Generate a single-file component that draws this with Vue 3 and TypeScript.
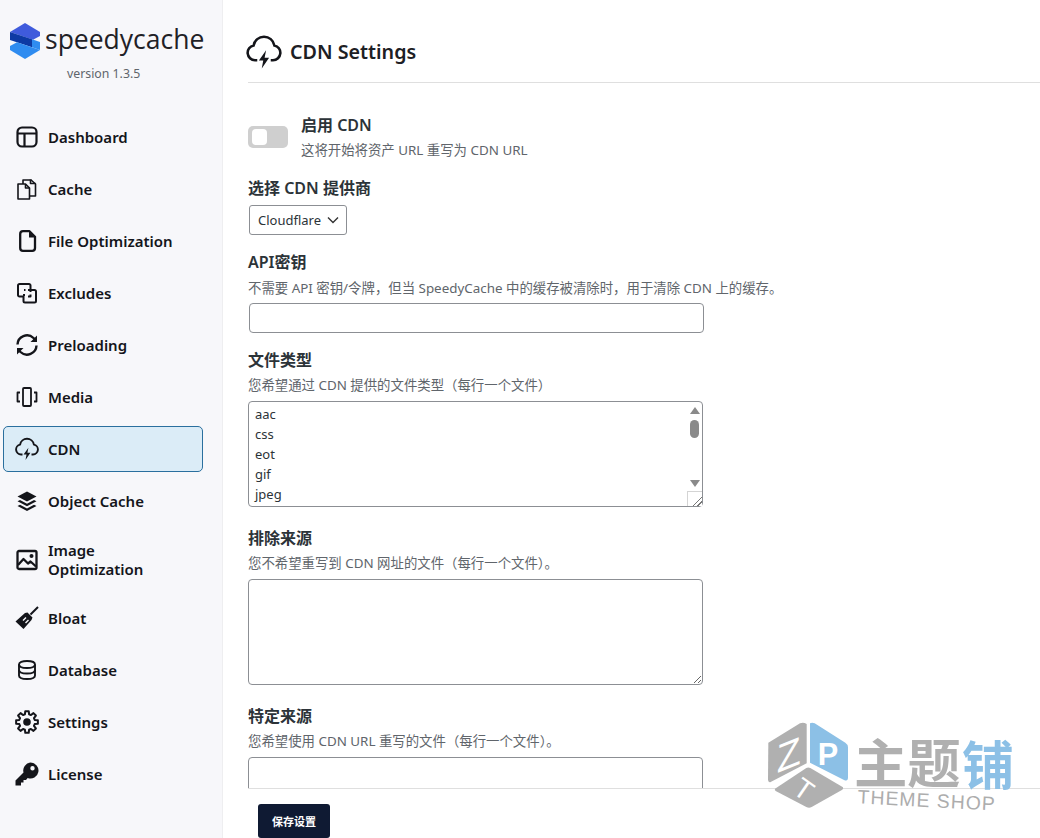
<script setup lang="ts">
interface NavItem {
  label: string
  icon: string
  active?: boolean
}

interface IconDef {
  stroke?: string[]
  fill?: string[]
  sw?: number
}

// Gear outline, generated so the teeth stay even
function gearPath(cx: number, cy: number, outer: number, inner: number, teeth: number): string {
  const pts: string[] = []
  const step = (Math.PI * 2) / teeth
  for (let i = 0; i < teeth; i++) {
    const a = i * step
    const offsets: [number, number][] = [
      [-0.2, outer],
      [0.2, outer],
      [0.34, inner],
      [0.66, inner],
    ]
    for (const [o, r] of offsets) {
      const t = a + o * step - Math.PI / 2
      pts.push(`${(cx + r * Math.cos(t)).toFixed(2)} ${(cy + r * Math.sin(t)).toFixed(2)}`)
    }
  }
  return `M${pts.join('L')}Z`
}

const icons: Record<string, IconDef> = {
  dashboard: {
    sw: 2.2,
    stroke: ['M7 2.500h10a4.500 4.500 0 0 1 4.500 4.500v10a4.500 4.500 0 0 1-4.500 4.500H7A4.500 4.500 0 0 1 2.500 17V7A4.500 4.500 0 0 1 7 2.500z', 'M2.500 8.500h19M9.500 8.500v13'],
  },
  cache: {
    sw: 1.6,
    stroke: ['M3 7h7.500l4 4v11H3z', 'M10.500 7v4h4', 'M8 7V3h7.500', 'M15.500 2.500v4h5', 'M15.500 2.500l5 4.500v12H14.500'],
  },
  file: {
    sw: 2.3,
    stroke: ['M8 2.200h6.500l5.500 5.500V19a2.800 2.800 0 0 1-2.800 2.800H8A2.800 2.800 0 0 1 5.200 19V5A2.800 2.800 0 0 1 8 2.200z'],
    fill: ['M14 2.500l6 6h-6z'],
  },
  excludes: {
    sw: 2,
    stroke: [
      'M9 15.500H4.500a1.500 1.500 0 0 1-1.500-1.500V4.500A1.500 1.500 0 0 1 4.500 3h9.500A1.500 1.500 0 0 1 15.500 4.500V9',
      'M15.500 9h4a1.500 1.500 0 0 1 1.500 1.500V20a1.500 1.500 0 0 1-1.500 1.500H10A1.500 1.500 0 0 1 8.500 20v-4',
      'M9 9h1.500M13 9h2.500v2M15.500 13.500v2H13M9 15.500V13',
    ],
  },
  preload: {
    sw: 2.4,
    stroke: ['M2.500 11.500a9.500 9.500 0 0 1 16-6.500L20 6.500', 'M21.500 12.500a9.500 9.500 0 0 1-16 6.500L4 17.500'],
    fill: ['M22 2.500v6.500h-6.500z', 'M2 21.500V15h6.500z'],
  },
  media: {
    sw: 1.8,
    stroke: ['M9 3h6a1 1 0 0 1 1 1v16a1 1 0 0 1-1 1H9a1 1 0 0 1-1-1V4a1 1 0 0 1 1-1z', 'M5 7.500H2.500v9H5M19 7.500h2.500v9H19'],
  },
  cdn: {
    sw: 1.9,
    stroke: ['M7.500 17.500H6a5 5 0 0 1-.9-9.900 7 7 0 0 1 13.800 0 5 5 0 0 1-.9 9.900H16.500'],
    fill: ['M13.400 10.800L8.600 17.600h2.900l-1 5.400 4.900-7.200h-3z'],
  },
  layers: {
    fill: [
      'M12 2.500l9.500 5L12 12.500 2.500 7.500z',
      'M5 11l7 3.700 7-3.700 2.500 1.300L12 17.300 2.500 12.300z',
      'M5 15.700l7 3.700 7-3.700 2.500 1.300L12 22 2.500 17z',
    ],
  },
  image: {
    sw: 2.3,
    stroke: ['M4 3h16a1.500 1.500 0 0 1 1.500 1.500v15A1.500 1.500 0 0 1 20 21H4A1.500 1.500 0 0 1 2.500 19.500v-15A1.500 1.500 0 0 1 4 3z', 'M3 17l5.500-6 4.500 4.500 2.500-2 5.500 5'],
    fill: ['M16.500 6a2 2 0 1 1 0 4 2 2 0 0 1 0-4z'],
  },
  brush: {
    sw: 2,
    stroke: ['M15.500 8.500L23 1'],
    fill: ['M12.500 6.500l5 5-1 2.500L8.500 23 .5 15.500l9.500-8.500zM10.500 11l-3 3 1 1 3-3zM13 13.500l-3 3 1 1 3-3z'],
  },
  database: {
    sw: 1.9,
    stroke: [
      'M12 3c4.700 0 8 1.400 8 3.500S16.700 10 12 10 4 8.600 4 6.500 7.300 3 12 3z',
      'M4 6.500v11C4 19.600 7.300 21 12 21s8-1.400 8-3.500v-11',
      'M4 12c0 2.100 3.300 3.500 8 3.500s8-1.400 8-3.500',
    ],
  },
  settings: {
    sw: 2,
    stroke: [gearPath(12, 12, 11, 8, 8)],
    fill: ['M12 8.200a3.800 3.800 0 1 1 0 7.600 3.800 3.800 0 0 1 0-7.600z'],
  },
  key: {
    fill: [
      'M15.500.5a8 8 0 1 1-2.800 15.500L11 18H8.500v2.500H6v3H.5V18.500l8-8A8 8 0 0 1 15.500.5zM17.500 4a2.200 2.200 0 1 0 0 4.400 2.200 2.200 0 0 0 0-4.400z',
    ],
  },
}

const navItems: NavItem[] = [
  { label: 'Dashboard', icon: 'dashboard' },
  { label: 'Cache', icon: 'cache' },
  { label: 'File Optimization', icon: 'file' },
  { label: 'Excludes', icon: 'excludes' },
  { label: 'Preloading', icon: 'preload' },
  { label: 'Media', icon: 'media' },
  { label: 'CDN', icon: 'cdn', active: true },
  { label: 'Object Cache', icon: 'layers' },
  { label: 'Image Optimization', icon: 'image' },
  { label: 'Bloat', icon: 'brush' },
  { label: 'Database', icon: 'database' },
  { label: 'Settings', icon: 'settings' },
  { label: 'License', icon: 'key' },
]

const fileTypes = 'aac\ncss\neot\ngif\njpeg\njs\njpg\nless\nmp3\nmp4'
</script>

<template>
  <div class="page">
    <aside class="sidebar">
      <div class="brand">
        <div class="brand__row">
          <svg class="brand__logo" viewBox="0 0 30 36" aria-hidden="true">
            <path d="M0 9L15 0l15 9v4l-7 3.700z" fill="#3f5bdc" />
            <path d="M0 9l22 7.300v8L0 17z" fill="#0d3aa4" />
            <path d="M22 16.300L30 19v8l-8-2.700z" fill="#2f8cf0" />
            <path d="M30 27L15 36 0 27v-4l7-3.700z" fill="#2f8cf0" />
          </svg>
          <span class="brand__name">speedycache</span>
        </div>
        <div class="brand__version">version 1.3.5</div>
      </div>
      <nav class="nav">
        <a v-for="item in navItems" :key="item.label" class="nav__item" :class="{ 'nav__item--active': item.active }">
          <svg class="nav__icon" viewBox="0 0 24 24" aria-hidden="true">
            <path v-for="d in icons[item.icon].stroke" :key="d" :d="d" fill="none" stroke="#14151a" :stroke-width="icons[item.icon].sw" stroke-linejoin="round" />
            <path v-for="d in icons[item.icon].fill" :key="d" :d="d" fill="#14151a" fill-rule="evenodd" />
          </svg>
          <span>{{ item.label }}</span>
        </a>
      </nav>
    </aside>

    <main class="main">
      <div class="scroll">
        <header class="head">
          <svg class="head__icon" viewBox="0 0 24 24" aria-hidden="true">
            <path v-for="d in icons.cdn.stroke" :key="d" :d="d" fill="none" stroke="#14151a" stroke-width="1.700" />
            <path v-for="d in icons.cdn.fill" :key="d" :d="d" fill="#14151a" />
          </svg>
          <h1>CDN Settings</h1>
        </header>

        <div class="switch-row">
          <span class="switch"><span class="switch__knob"></span></span>
          <div>
            <div class="label label--switch">启用 CDN</div>
            <div class="hint">这将开始将资产 URL 重写为 CDN URL</div>
          </div>
        </div>

        <section class="field field--provider">
          <div class="label">选择 CDN 提供商</div>
          <div class="select">
            Cloudflare
            <svg viewBox="0 0 12 8" aria-hidden="true"><path d="M1 1.500l5 5 5-5" fill="none" stroke="#333" stroke-width="1.400" /></svg>
          </div>
        </section>

        <section class="field field--api">
          <div class="label">API密钥</div>
          <div class="hint">不需要 API 密钥/令牌，但当 SpeedyCache 中的缓存被清除时，用于清除 CDN 上的缓存。</div>
          <input class="input" type="text" />
        </section>

        <section class="field field--types">
          <div class="label">文件类型</div>
          <div class="hint">您希望通过 CDN 提供的文件类型（每行一个文件）</div>
          <div class="area-wrap">
            <textarea class="area area--scroll" :value="fileTypes" readonly></textarea>
            <!-- drawn scrollbar, the headless browser has only overlay ones -->
            <div class="fake-bar">
              <span class="fake-bar__up"></span>
              <span class="fake-bar__thumb"></span>
              <span class="fake-bar__down"></span>
              <span class="fake-bar__corner"></span>
            </div>
          </div>
        </section>

        <section class="field field--exclude">
          <div class="label">排除来源</div>
          <div class="hint">您不希望重写到 CDN 网址的文件（每行一个文件）。</div>
          <textarea class="area"></textarea>
        </section>

        <section class="field field--specific">
          <div class="label">特定来源</div>
          <div class="hint">您希望使用 CDN URL 重写的文件（每行一个文件）。</div>
          <textarea class="area"></textarea>
        </section>
      </div>

      <footer class="foot">
        <button class="save" type="button">保存设置</button>
      </footer>
    </main>

    <!-- watermark stamped over the screenshot -->
    <svg class="stamp" viewBox="0 0 870 384" aria-hidden="true">
      <path d="M55 98L150 40q10-5 20 2V160L62 216q-6 3-8-6z" fill="#b0b0b0" />
      <path d="M180 40q6-4 14 0l92 58q8 5 8 14v90q0 14-12 8l-102-52z" fill="#8cc0e6" />
      <path d="M75 236l94-62q6-3 12 0l98 58q2 4-2 7l-92 52q-8 4-16 0l-92-48q-4-3-2-7z" fill="#b0b0b0" />
      <text class="stamp__cube stamp__cube--z" transform="translate(80 190) skewY(-22)">Z</text>
      <text x="203" y="164" class="stamp__cube">P</text>
      <text x="136" y="272" class="stamp__cube stamp__cube--t" transform="rotate(35 170 240)">T</text>
      <text x="312" y="218" class="stamp__cn" textLength="320" lengthAdjust="spacingAndGlyphs" fill="#b0b0b0">主题</text>
      <text x="636" y="226" class="stamp__cn" textLength="156" lengthAdjust="spacingAndGlyphs" fill="#8cc0e6">铺</text>
      <text x="322" y="280" class="stamp__en" textLength="412" transform="rotate(3 322 280)">THEME SHOP</text>
    </svg>
  </div>
</template>

<style>
html,
body {
  margin: 0;
  background: #fff;
}
</style>

<style scoped>
.page {
  position: relative;
  display: flex;
  height: 100vh;
  overflow: hidden;
  font-family: 'Noto Sans', 'Noto Sans CJK SC', sans-serif;
  color: #2c3338;
}

.sidebar {
  flex: 0 0 223px;
  box-sizing: border-box;
  background: #f7f7fa;
  border-right: 1px solid #eeeef0;
  padding: 23px 0 0 3px;
}

.brand__row {
  display: flex;
  align-items: center;
  gap: 5px;
  padding-left: 7px;
}

.brand__logo {
  width: 30px;
  height: 36px;
  flex: none;
}

.brand__name {
  font-family: 'Open Sans', sans-serif;
  font-size: 26.500px;
  color: #1f2126;
  line-height: 32px;
  padding-bottom: 4px;
}

.brand__version {
  margin-top: 5px;
  padding-left: 64px;
  font-size: 12.300px;
  line-height: 20px;
  color: #60656b;
}

.nav {
  display: flex;
  flex-direction: column;
  gap: 6px;
  width: 200px;
  margin-top: 30px;
}

.nav__item {
  display: flex;
  align-items: center;
  gap: 9px;
  box-sizing: border-box;
  min-height: 46px;
  padding: 9.500px 12px 9.500px 11px;
  border: 1px solid transparent;
  border-radius: 5px;
  font-size: 15px;
  font-weight: 600;
  line-height: 19px;
  color: #14151a;
}

.nav__item--active {
  background: #dbecf7;
  border-color: #2a6f9e;
}

.nav__icon {
  width: 24px;
  height: 24px;
  flex: none;
}

.main {
  flex: 1;
  min-width: 0;
  display: flex;
  flex-direction: column;
}

.scroll {
  flex: 1;
  min-height: 0;
  overflow: hidden;
  padding-left: 25px;
}

.head {
  display: flex;
  align-items: center;
  gap: 8px;
  height: 83px;
  box-sizing: border-box;
  padding-top: 21px;
  border-bottom: 1px solid #dfdfdf;
}

.head__icon {
  width: 36px;
  height: 36px;
  margin-left: -2px;
}

.head h1 {
  margin: 0;
  font-size: 19.700px;
  font-weight: 600;
  color: #1d2024;
}

.switch-row {
  display: flex;
  align-items: center;
  gap: 13px;
  margin-top: 32px;
}

.switch {
  display: block;
  width: 40px;
  height: 22px;
  border-radius: 5px;
  background: #cfcfcf;
  position: relative;
}

.switch__knob {
  position: absolute;
  left: 4px;
  top: 3px;
  width: 15px;
  height: 16px;
  border-radius: 4px;
  background: #fff;
}

.label {
  font-size: 16px;
  font-weight: 600;
  line-height: 20px;
  color: #2c3338;
}

.hint {
  font-size: 13.400px;
  line-height: 18px;
  color: #60656b;
}

.label--switch {
  margin-bottom: 6px;
}

.field--provider {
  margin-top: 19px;
}

.select {
  display: inline-flex;
  align-items: center;
  gap: 6px;
  box-sizing: border-box;
  height: 30px;
  margin: 7px 0 0 1px;
  padding: 0 7px 0 8px;
  border: 1px solid #8c8f94;
  border-radius: 3px;
  font-size: 13px;
}

.select svg {
  width: 12px;
  height: 8px;
}

.field--api,
.field--types {
  margin-top: 17px;
}

.input {
  display: block;
  box-sizing: border-box;
  width: 455px;
  height: 30px;
  margin: 6px 0 0 1px;
  border: 1px solid #8c8f94;
  border-radius: 4px;
  background: #fff;
  outline: none;
}

.field--exclude,
.field--specific {
  margin-top: 21px;
}

.field--api .hint {
  margin-top: 7px;
}

.field--types .hint,
.field--exclude .hint,
.field--specific .hint {
  margin-top: 6px;
}

.area-wrap {
  position: relative;
  width: 455px;
  margin-top: 7px;
}

.area {
  display: block;
  box-sizing: border-box;
  width: 455px;
  height: 106px;
  margin: 7px 0 0;
  padding: 2px 6px;
  border: 1px solid #8c8f94;
  border-radius: 4px;
  background: #fff;
  font-family: inherit;
  font-size: 13px;
  line-height: 20px;
  color: #2c3338;
  outline: none;
}

.area--scroll {
  margin: 0;
  overflow: hidden;
  resize: none;
}

.fake-bar {
  position: absolute;
  top: 1px;
  right: 1px;
  bottom: 1px;
  width: 15px;
  display: flex;
  flex-direction: column;
  align-items: center;
}

.fake-bar__up,
.fake-bar__down {
  width: 0;
  height: 0;
  border-left: 5px solid transparent;
  border-right: 5px solid transparent;
}

.fake-bar__up {
  margin-top: 5px;
  border-bottom: 7px solid #8a8a8a;
}

.fake-bar__down {
  margin-top: 42px;
  border-top: 7px solid #8a8a8a;
}

.fake-bar__thumb {
  width: 9px;
  height: 18px;
  margin-top: 6px;
  border-radius: 5px;
  background: #8a8a8a;
}

.fake-bar__corner {
  position: absolute;
  right: 0;
  bottom: 0;
  width: 15px;
  height: 15px;
  box-sizing: border-box;
  border: 1px solid #d4d4d4;
  border-width: 1px 0 0 1px;
  background: #fff linear-gradient(135deg, transparent 45%, #777 45% 53%, transparent 53% 70%, #777 70% 78%, transparent 78%) right bottom / 9px 9px no-repeat;
}

.foot {
  flex: 0 0 50px;
  box-sizing: border-box;
  margin-left: 25px;
  border-top: 1px solid #dfdfdf;
  padding: 15px 0 0 10px;
  background: #fff;
}

.save {
  display: block;
  width: 72px;
  height: 34px;
  border: 0;
  border-radius: 3px;
  background: #0f1a33;
  color: #fff;
  font-family: inherit;
  font-size: 11px;
  font-weight: 700;
  padding: 0;
}

.stamp {
  position: absolute;
  left: 750px;
  top: 710px;
  width: 290px;
  height: 128px;
  pointer-events: none;
}

.stamp__cube {
  font-family: 'Liberation Sans', sans-serif;
  font-size: 92px;
  font-weight: 700;
  fill: #fff;
}

.stamp__cube--z {
  font-size: 118px;
  font-weight: 400;
}

.stamp__cube--t {
  font-size: 84px;
  font-weight: 400;
}

.stamp__cn {
  font-family: 'Noto Sans CJK SC', sans-serif;
  font-size: 158px;
  font-weight: 700;
}

.stamp__en {
  font-family: 'Liberation Sans', sans-serif;
  font-size: 58px;
  fill: #adadad;
}
</style>
